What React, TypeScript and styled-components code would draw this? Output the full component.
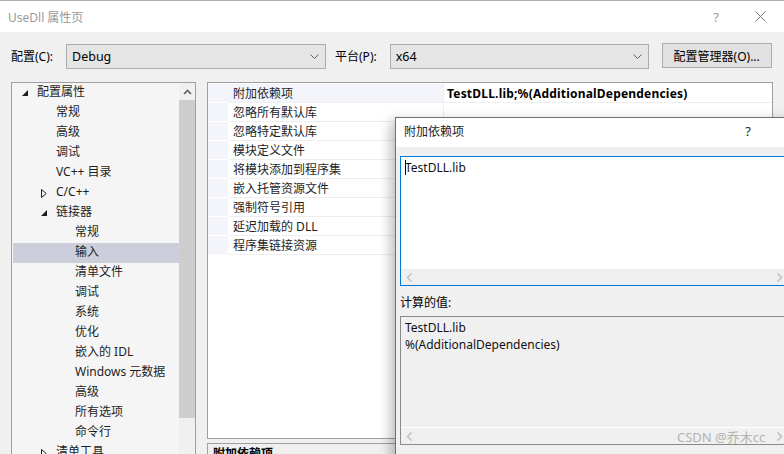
import React from 'react'
import styled, { createGlobalStyle } from 'styled-components'

const GlobalStyle = createGlobalStyle`
  html, body {
    margin: 0;
    padding: 0;
    overflow: hidden;
    background: #f0f0f0;
  }
  body {
    font-family: "Noto Sans", "Noto Sans CJK SC", sans-serif;
    font-size: 12px;
    color: #000;
  }
`

const Window = styled.div`
  position: relative;
  width: 784px;
  height: 454px;
  overflow: hidden;
  display: flex;
  flex-direction: column;
  border-top: 1px solid #acacac;
  box-sizing: border-box;
  background: #f0f0f0;
`

const TitleBar = styled.div`
  height: 31px;
  flex-shrink: 0;
  background: #fff;
  display: flex;
  align-items: center;
  padding-left: 8px;
`

const TitleText = styled.div<{ $dark?: boolean }>`
  flex: 1;
  color: ${p => (p.$dark ? '#1e1e1e' : '#9a9a9a')};
  font-size: 12px;
`

const HelpMark = styled.div<{ $right: number; $color?: string }>`
  font-size: 13px;
  color: ${p => p.$color || '#9a9a9a'};
  margin-right: ${p => p.$right}px;
`

const CloseIcon = styled.svg`
  margin-right: 18px;
`

const Toolbar = styled.div`
  height: 48px;
  flex-shrink: 0;
  display: flex;
  align-items: center;
  padding-left: 11px;
`

const Label = styled.span<{ $gap: number }>`
  margin-right: ${p => p.$gap}px;
  line-height: 17px;
`

const Combo = styled.div<{ $width: number; $gap: number }>`
  width: ${p => p.$width}px;
  height: 25px;
  box-sizing: border-box;
  border: 1px solid #adadad;
  background: #e5e5e5;
  display: flex;
  align-items: center;
  padding: 0 6px 0 5px;
  margin-right: ${p => p.$gap}px;
`

const ComboText = styled.span`
  flex: 1;
  font-size: 12.5px;
`

const Button = styled.div`
  width: 110px;
  height: 25px;
  box-sizing: border-box;
  border: 1px solid #adadad;
  background: #e1e1e1;
  display: flex;
  align-items: center;
  justify-content: center;
  margin-top: -1px;
`

const Body = styled.div`
  flex: 1;
  min-height: 0;
  display: flex;
  padding: 2px 11px 0 11px;
`

const Tree = styled.div`
  width: 185px;
  height: 420px;
  flex-shrink: 0;
  box-sizing: border-box;
  border: 1px solid #a0a0a0;
  border-bottom: none;
  background: #f5f5f5;
  display: flex;
  margin-right: 11px;
  overflow: hidden;
`

const TreeList = styled.div`
  flex: 1;
  padding-left: 1px;
`

const TreeRow = styled.div<{ $level: number; $selected?: boolean }>`
  height: 20px;
  display: flex;
  align-items: center;
  padding-left: ${p => 5 + p.$level * 19}px;
  background: ${p => (p.$selected ? '#cccedb' : 'transparent')};
  color: #1e1e1e;
  white-space: nowrap;
`

const TreeLabel = styled.span`
  line-height: 20px;
  margin-top: -2px;
`

const Expander = styled.div`
  width: 19px;
  height: 20px;
  display: flex;
  align-items: center;
  padding-left: 4px;
  box-sizing: border-box;
`

const ScrollBar = styled.div`
  width: 16px;
  background: #f0f0f0;
  display: flex;
  flex-direction: column;
`

const ScrollArrow = styled.div`
  height: 17px;
  display: flex;
  align-items: center;
  justify-content: center;
`

const ScrollThumb = styled.div`
  height: 318px;
  background: #cdcdcd;
`

const RightPane = styled.div`
  flex: 1;
  display: flex;
  flex-direction: column;
`

const Grid = styled.div`
  height: 357px;
  flex-shrink: 0;
  box-sizing: border-box;
  border: 1px solid #a0a0a0;
  background: #fff;
  padding-top: 1px;
`

const GridRow = styled.div`
  display: flex;
  height: 19px;
`

const Gutter = styled.div`
  width: 20px;
  background: #f3f5fa;
  border-bottom: 1px solid #fff;
`

const NameCell = styled.div<{ $selected?: boolean }>`
  width: 215px;
  box-sizing: border-box;
  padding: 1px 0 0 5px;
  line-height: 17px;
  background: ${p => (p.$selected ? '#f3f5fa' : '#fff')};
  border-bottom: 1px solid #eeeeee;
  color: #1e1e1e;
  white-space: nowrap;
`

const ValueCell = styled.div`
  flex: 1;
  padding: 1px 0 0 3px;
  line-height: 17px;
  font-weight: 700;
  border-left: 1px solid #eeeeee;
  border-bottom: 1px solid #eeeeee;
  white-space: nowrap;
  letter-spacing: 0.2px;
`

const Description = styled.div`
  margin-top: 4px;
  height: 60px;
  box-sizing: border-box;
  border: 1px solid #a0a0a0;
  background: #f0f0f0;
  padding: 1px 5px;
  font-weight: 700;
  line-height: 17px;
`

const Dialog = styled.div`
  position: absolute;
  left: 395px;
  top: 116px;
  width: 400px;
  height: 350px;
  box-sizing: border-box;
  border: 1px solid #6f6f6f;
  background: #f0f0f0;
  box-shadow: -4px 4px 12px rgba(0, 0, 0, 0.28);
  display: flex;
  flex-direction: column;
`

const DialogTitle = styled.div`
  height: 29px;
  box-sizing: border-box;
  background: #fff;
  display: flex;
  align-items: center;
  padding: 0 0 3px 8px;
`

const DialogBody = styled.div`
  padding: 9px 7px 0 4px;
  display: flex;
  flex-direction: column;
`

const EditBox = styled.div`
  height: 130px;
  box-sizing: border-box;
  border: 1px solid #0078d7;
  background: #fff;
  display: flex;
  flex-direction: column;
`

const ReadOnlyBox = styled.div`
  height: 129px;
  box-sizing: border-box;
  border: 1px solid #8a8a8a;
  background: #f0f0f0;
  display: flex;
  flex-direction: column;
`

const BoxText = styled.div`
  flex: 1;
  padding: 2px 4px 0 4px;
  line-height: 17px;
  color: #111;
`

const Caret = styled.span`
  display: inline-block;
  width: 1px;
  height: 15px;
  background: #000;
  vertical-align: -3px;
  margin-right: -1px;
`

const HScroll = styled.div<{ $line?: boolean }>`
  height: 16px;
  flex-shrink: 0;
  background: #f0f0f0;
  border-top: ${p => (p.$line ? '1px solid #fff' : 'none')};
  display: flex;
  align-items: center;
  justify-content: space-between;
  padding: 0 3px 0 5px;
`

const SectionLabel = styled.div`
  margin-top: 8px;
  margin-bottom: 5px;
  line-height: 17px;
`

const Watermark = styled.div`
  position: absolute;
  left: 677px;
  top: 426px;
  font-size: 13px;
  color: #b3b3b3;
`

const Chevron = () => (
  <svg width="9" height="5" viewBox="0 0 9 5">
    <polyline points="0.5,0.5 4.5,4.5 8.5,0.5" fill="none" stroke="#606060" strokeWidth="1" />
  </svg>
)

const ArrowLeft = () => (
  <svg width="7" height="9" viewBox="0 0 7 9">
    <polyline points="5.5,0.5 1.5,4.5 5.5,8.5" fill="none" stroke="#c2c2c2" strokeWidth="1.6" />
  </svg>
)

const ArrowRight = () => (
  <svg width="7" height="9" viewBox="0 0 7 9">
    <polyline points="1.5,0.5 5.5,4.5 1.5,8.5" fill="none" stroke="#c2c2c2" strokeWidth="1.6" />
  </svg>
)

const Expanded = () => (
  <svg width="7" height="7" viewBox="0 0 7 7">
    <polygon points="6,0 6,6 0,6" fill="#1e1e1e" />
  </svg>
)

const Collapsed = () => (
  <svg width="6" height="9" viewBox="0 0 6 9">
    <polygon points="0.5,0.5 5.2,4.5 0.5,8.5" fill="none" stroke="#1e1e1e" strokeWidth="1" />
  </svg>
)

type TreeItem = { label: string; level: number; state?: 'open' | 'closed'; selected?: boolean }

const treeItems: TreeItem[] = [
  { label: '配置属性', level: 0, state: 'open' },
  { label: '常规', level: 1 },
  { label: '高级', level: 1 },
  { label: '调试', level: 1 },
  { label: 'VC++ 目录', level: 1 },
  { label: 'C/C++', level: 1, state: 'closed' },
  { label: '链接器', level: 1, state: 'open' },
  { label: '常规', level: 2 },
  { label: '输入', level: 2, selected: true },
  { label: '清单文件', level: 2 },
  { label: '调试', level: 2 },
  { label: '系统', level: 2 },
  { label: '优化', level: 2 },
  { label: '嵌入的 IDL', level: 2 },
  { label: 'Windows 元数据', level: 2 },
  { label: '高级', level: 2 },
  { label: '所有选项', level: 2 },
  { label: '命令行', level: 2 },
  { label: '清单工具', level: 1, state: 'closed' },
]

const properties = [
  { name: '附加依赖项', value: 'TestDLL.lib;%(AdditionalDependencies)' },
  { name: '忽略所有默认库', value: '' },
  { name: '忽略特定默认库', value: '' },
  { name: '模块定义文件', value: '' },
  { name: '将模块添加到程序集', value: '' },
  { name: '嵌入托管资源文件', value: '' },
  { name: '强制符号引用', value: '' },
  { name: '延迟加载的 DLL', value: '' },
  { name: '程序集链接资源', value: '' },
]

export default function App() {
  return (
    <Window>
      <GlobalStyle />
      <TitleBar>
        <TitleText>UseDll 属性页</TitleText>
        <HelpMark $right={36}>?</HelpMark>
        <CloseIcon width="11" height="11" viewBox="0 0 11 11">
          <path d="M0.5 0.5 L10.5 10.5 M10.5 0.5 L0.5 10.5" stroke="#7a7a7a" strokeWidth="1" />
        </CloseIcon>
      </TitleBar>

      <Toolbar>
        <Label $gap={13}>配置(C):</Label>
        <Combo $width={260} $gap={9}>
          <ComboText>Debug</ComboText>
          <Chevron />
        </Combo>
        <Label $gap={13}>平台(P):</Label>
        <Combo $width={259} $gap={13}>
          <ComboText>x64</ComboText>
          <Chevron />
        </Combo>
        <Button>配置管理器(O)...</Button>
      </Toolbar>

      <Body>
        <Tree>
          <TreeList>
            {treeItems.map((item, i) => (
              <TreeRow key={i} $level={item.level} $selected={item.selected}>
                <Expander>
                  {item.state === 'open' && <Expanded />}
                  {item.state === 'closed' && <Collapsed />}
                </Expander>
                <TreeLabel>{item.label}</TreeLabel>
              </TreeRow>
            ))}
          </TreeList>
          <ScrollBar>
            <ScrollArrow>
              <svg width="9" height="6" viewBox="0 0 9 6">
                <polyline points="1,5 4.5,1.5 8,5" fill="none" stroke="#606060" strokeWidth="1.6" />
              </svg>
            </ScrollArrow>
            <ScrollThumb />
          </ScrollBar>
        </Tree>

        <RightPane>
          <Grid>
            {properties.map((p, i) => (
              <GridRow key={i}>
                <Gutter />
                <NameCell $selected={i === 0}>{p.name}</NameCell>
                <ValueCell>{p.value}</ValueCell>
              </GridRow>
            ))}
          </Grid>
          <Description>附加依赖项</Description>
        </RightPane>
      </Body>

      <Dialog>
        <DialogTitle>
          <TitleText $dark>附加依赖项</TitleText>
          <HelpMark $right={43} $color="#1e1e1e">?</HelpMark>
        </DialogTitle>
        <DialogBody>
          <EditBox>
            <BoxText>
              <Caret />
              TestDLL.lib
            </BoxText>
            <HScroll>
              <ArrowLeft />
              <ArrowRight />
            </HScroll>
          </EditBox>
          <SectionLabel>计算的值:</SectionLabel>
          <ReadOnlyBox>
            <BoxText>
              TestDLL.lib
              <br />
              %(AdditionalDependencies)
            </BoxText>
            <HScroll $line>
              <ArrowLeft />
              <ArrowRight />
            </HScroll>
          </ReadOnlyBox>
        </DialogBody>
      </Dialog>

      <Watermark>CSDN @乔木cc</Watermark>
    </Window>
  )
}
